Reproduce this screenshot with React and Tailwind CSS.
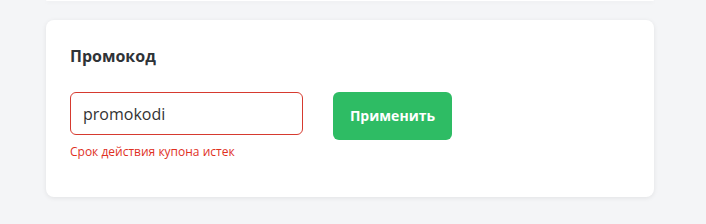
import React, { useState } from 'react';

const App = () => {
  const [code, setCode] = useState('promokodi');

  return (
    <div className="min-h-[224px] w-[706px] bg-[#f4f5f7] pl-[46px] pr-[52px]" style={{ fontFamily: '"Open Sans", "Noto Sans", sans-serif' }}>
      {/* край предыдущей карточки */}
      <div className="h-[1px] rounded-b-lg bg-white shadow-[0_1px_4px_rgba(0,0,0,0.08)]" />

      <div className="mt-[19px] rounded-lg bg-white px-6 pt-6 pb-[37px] shadow-[0_1px_5px_rgba(0,0,0,0.08)]">
        <h3 className="text-base leading-6 font-bold text-[#2f3337]">Промокод</h3>

        <div className="mt-6 flex items-start gap-[30px]">
          <div className="w-[233px]">
            <input
              value={code}
              onChange={(e) => setCode(e.target.value)}
              className="h-[43px] w-full rounded-md border border-[#d63a2f] px-3 text-base text-[#333] outline-none"
            />
            <div className="mt-[9px] text-xs leading-4 text-[#e0311f]">Срок действия купона истек</div>
          </div>
          <button className="h-12 w-[119px] rounded-md bg-[#2ebc64] text-sm font-bold text-white">
            Применить
          </button>
        </div>
      </div>
    </div>
  );
};

export default App;
